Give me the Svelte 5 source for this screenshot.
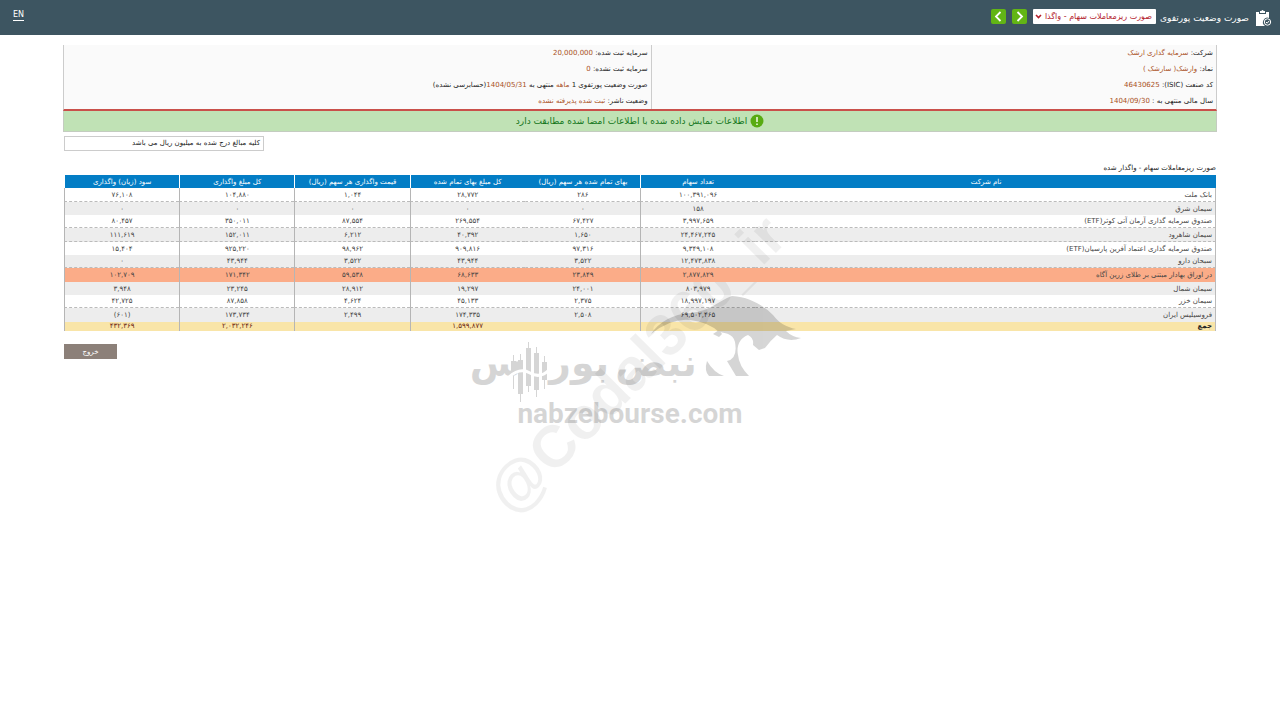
<script lang="ts">
  const reports = ['صورت ریزمعاملات سهام - واگذار شده', 'صورت خلاصه سرمایه گذاری‌ها'];
  let report = $state(reports[0]);

  const company = [
    { label: 'شرکت:', value: 'سرمایه گذاری ارشک' },
    { label: 'نماد:', value: 'وارشک( سارشک )' },
    { label: 'کد صنعت (ISIC):', value: '46430625' },
    { label: 'سال مالی منتهی به :', value: '1404/09/30' }
  ];

  const columns = [
    'نام شرکت',
    'تعداد سهام',
    'بهای تمام شده هر سهم (ریال)',
    'کل مبلغ بهای تمام شده',
    'قیمت واگذاری هر سهم (ریال)',
    'کل مبلغ واگذاری',
    'سود (زیان) واگذاری'
  ];

  const rows = [
    { name: 'بانک ملت', cells: ['۱۰۰,۳۹۱,۰۹۶', '۲۸۶', '۲۸,۷۷۲', '۱,۰۴۴', '۱۰۴,۸۸۰', '۷۶,۱۰۸'], dashed: true },
    { name: 'سیمان شرق', cells: ['۱۵۸', '۰', '۰', '۰', '۰', '۰'] },
    { name: 'صندوق سرمایه گذاری آرمان آتی کوثر(ETF)', cells: ['۳,۹۹۷,۶۵۹', '۶۷,۴۲۷', '۲۶۹,۵۵۴', '۸۷,۵۵۴', '۳۵۰,۰۱۱', '۸۰,۴۵۷'], dashed: true },
    { name: 'سیمان شاهرود', cells: ['۲۴,۴۶۷,۲۴۵', '۱,۶۵۰', '۴۰,۳۹۲', '۶,۲۱۲', '۱۵۲,۰۱۱', '۱۱۱,۶۱۹'], dashed: true },
    { name: 'صندوق سرمایه گذاری اعتماد آفرین پارسیان(ETF)', cells: ['۹,۳۴۹,۱۰۸', '۹۷,۳۱۶', '۹۰۹,۸۱۶', '۹۸,۹۶۲', '۹۲۵,۲۲۰', '۱۵,۴۰۴'] },
    { name: 'سبحان دارو', cells: ['۱۲,۴۷۳,۸۳۸', '۳,۵۲۲', '۴۳,۹۴۴', '۳,۵۲۲', '۴۳,۹۴۴', '۰'], dashed: true },
    { name: 'در اوراق بهادار مبتنی بر طلای زرین آگاه', cells: ['۲,۸۷۷,۸۲۹', '۲۳,۸۴۹', '۶۸,۶۳۳', '۵۹,۵۳۸', '۱۷۱,۳۴۲', '۱۰۲,۷۰۹'], active: true },
    { name: 'سیمان شمال', cells: ['۸۰۳,۹۷۹', '۲۴,۰۰۱', '۱۹,۲۹۷', '۲۸,۹۱۲', '۲۳,۲۴۵', '۳,۹۴۸'] },
    { name: 'سیمان خزر', cells: ['۱۸,۹۹۷,۱۹۷', '۲,۳۷۵', '۴۵,۱۳۳', '۴,۶۲۴', '۸۷,۸۵۸', '۴۲,۷۲۵'], dashed: true },
    { name: 'فروسیلیس ایران', cells: ['۶۹,۵۰۲,۴۶۵', '۲,۵۰۸', '۱۷۴,۳۳۵', '۲,۴۹۹', '۱۷۳,۷۳۴', '(۶۰۱)'] }
  ];

  const totals = ['', '', '۱,۵۹۹,۸۷۷', '', '۲,۰۳۲,۲۴۶', '۴۳۲,۳۶۹'];
</script>

<div class="page" dir="rtl">
  <header>
    <svg class="clipboard" width="18" height="18" viewBox="0 0 18 18" aria-hidden="true">
      <path d="M1 3h3v2h7V3h3v6a4.500 4.500 0 0 0-4 8H1z" fill="#fff" />
      <path d="M5 4V2h1.500a1 1 0 0 1 2 0H10v2z" fill="#fff" />
      <circle cx="12.5" cy="13" r="3.2" fill="#3d5561" stroke="#fff" stroke-width="1" />
      <path d="M11 13l1.2 1.2 2-2.3" fill="none" stroke="#fff" stroke-width="1" />
    </svg>
    <label class="title" for="report">صورت وضعیت پورتفوی</label>
    <div class="select-wrapper">
      <select id="report" bind:value={report}>
        {#each reports as item}
          <option value={item}>{item}</option>
        {/each}
      </select>
      <svg class="select-arrow" width="7" height="5" viewBox="0 0 7 5" aria-hidden="true">
        <path d="M1 1l2.5 2.5L6 1" fill="none" stroke="#b3202c" stroke-width="1.6" />
      </svg>
    </div>
    <button class="nav" aria-label="بعدی">
      <svg width="15" height="15" viewBox="0 0 15 15"><path d="M5.5 3l4.5 4.5L5.5 12" /></svg>
    </button>
    <button class="nav" aria-label="قبلی">
      <svg width="15" height="15" viewBox="0 0 15 15"><path d="M9.5 3L5 7.5l4.5 4.5" /></svg>
    </button>
    <a class="lang" href="#en">EN</a>
  </header>

  <main>
    <section class="info">
      <div class="info-col">
        {#each company as item}
          <p>{item.label} <span>{item.value}</span></p>
        {/each}
      </div>
      <div class="info-col">
        <p>سرمایه ثبت شده: <span>20,000,000</span></p>
        <p>سرمایه ثبت نشده: <span>0</span></p>
        <p>صورت وضعیت پورتفوی 1 <span>ماهه</span> منتهی به <span>1404/05/31</span>(حسابرسی نشده)</p>
        <p>وضعیت ناشر: <span>ثبت شده پذیرفته نشده</span></p>
      </div>
    </section>

    <div class="notice">
      <svg width="14" height="14" viewBox="0 0 14 14" aria-hidden="true">
        <circle cx="7" cy="7" r="6.5" fill="#58ab12" />
        <path d="M7 3v5M7 9.5v1.5" stroke="#e9f7dc" stroke-width="1.6" />
      </svg>
      اطلاعات نمایش داده شده با اطلاعات امضا شده مطابقت دارد
    </div>

    <p class="unit">کلیه مبالغ درج شده به میلیون ریال می باشد</p>

    <table>
      <caption>صورت ریزمعاملات سهام - واگذار شده</caption>
      <thead>
        <tr>
          {#each columns as column}
            <th scope="col">{column}</th>
          {/each}
        </tr>
      </thead>
      <tbody>
        {#each rows as row}
          <tr class:dashed={row.dashed} class:active={row.active}>
            <td>{row.name}</td>
            {#each row.cells as cell}
              <td>{cell}</td>
            {/each}
          </tr>
        {/each}
      </tbody>
      <tfoot>
        <tr>
          <td>جمع</td>
          {#each totals as total}
            <td>{total}</td>
          {/each}
        </tr>
      </tfoot>
    </table>

    <button class="exit">خروج</button>
  </main>

  <svg class="watermark" width="350" height="330" viewBox="470 200 350 330" direction="ltr">
    <text class="handle" x="512" y="517" transform="rotate(-45 512 517)">@Codal360_ir</text>
    <g class="logo">
      <text class="word" x="656" y="376">نبض</text>
      <text class="word" x="579" y="376">بور</text>
      <text class="word" x="496" y="376">س</text>
      <text class="site" x="630" y="423">nabzebourse.com</text>
      <path d="M511 361h5v12h-5zM513 355h1v34h-1zM518 360h5v34h-5zM520 354h1v48h-1zM526 348h5v38h-5zM528 342h1v50h-1zM534 353h5v37h-5zM536 347h1v50h-1zM542 362h5v18h-5zM544 356h1v33h-1z" />
      <path d="M651 334Q664 315 690 313C711 311 718 301 732 296C750 297 764 306 773 315C779 323 786 327 796 329L786 331Q792 337 801 338Q788 343 777 335Q771 340 765 348L759 350L753 345Q754 338 748 335C740 338 736 346 738 355Q739 366 749 376H736L727 361Q738 359 735 342C733 333 724 333 719 332Q708 322 690 320Q671 318 651 334z" />
      <path d="M707 361Q704 371 709 376H724Q714 373 707 361zM713 334l6-4 3 4-3 3z" />
    </g>
    <path d="M509 377Q520 367 530 373T549 370" fill="none" stroke="#fff" stroke-width="3" />
  </svg>
</div>

<style>
  :global(body) {
    background: #fff;
  }

  .page {
    position: relative;
    min-height: 100vh;
    color: #222;
    font-family: 'DejaVu Sans', 'Noto Sans', sans-serif;
    font-size: 7px;
  }

  header {
    display: flex;
    align-items: center;
    height: 35px;
    padding: 0 7px 2px 13px;
    background: #3d5561;
    box-sizing: border-box;
  }

  .clipboard {
    margin-top: 2px;
  }

  .title {
    margin: 2px 6px 0 4px;
    color: #fff;
    font-size: 9px;
  }

  .select-wrapper {
    position: relative;
    width: 123px;
    margin-left: 6px;
  }

  select {
    display: block;
    width: 100%;
    height: 15px;
    padding: 0 4px 0 12px;
    border: none;
    border-radius: 1px;
    appearance: none;
    background: #fff;
    color: #b3202c;
    font-family: inherit;
    font-size: 8px;
  }

  .select-arrow {
    position: absolute;
    left: 2px;
    top: 5px;
    pointer-events: none;
  }

  .nav {
    width: 15px;
    height: 15px;
    margin-left: 6px;
    padding: 0;
    border: none;
    border-radius: 2px;
    background: #62b515;
    cursor: pointer;
  }

  .nav svg {
    display: block;
    fill: none;
    stroke: #fff;
    stroke-width: 1.8;
  }

  .lang {
    margin-right: auto;
    margin-bottom: 4px;
    border-bottom: 1px solid #fff;
    color: #fff;
    font-size: 8px;
    line-height: 11px;
    text-decoration: none;
  }

  main {
    margin: 10px 5% 0;
  }

  .info {
    display: grid;
    grid-template-columns: 49fr 51fr;
    margin-left: -1px;
    margin-right: -1px;
    border: 1px solid #ccc;
    border-top: none;
    border-bottom: 2px solid #c9504a;
    background: #fafafa;
  }

  .info-col {
    padding: 0 3px;
  }

  .info-col + .info-col {
    border-right: 1px solid #ccc;
  }

  .info p {
    margin: 0;
    line-height: 16px;
    white-space: nowrap;
  }

  .info span {
    color: #a9501c;
  }

  .notice {
    display: flex;
    align-items: center;
    justify-content: center;
    gap: 3px;
    height: 20px;
    margin: 0 -1px;
    border: 1px solid #c4ccc0;
    border-top: none;
    background: #c0e2b5;
    color: #12751a;
    font-size: 9px;
  }

  .unit {
    width: 200px;
    margin: 4px auto 11px 0;
    padding: 0 3px;
    border: 1px solid #ccc;
    box-sizing: border-box;
    line-height: 13px;
  }

  table {
    width: 100%;
    border-collapse: separate;
    border-spacing: 0;
    table-layout: fixed;
  }

  caption {
    color: #222;
    line-height: 13px;
    text-align: right;
  }

  th,
  td {
    height: 13px;
    padding: 0;
    border-left: 1px solid transparent;
    box-sizing: border-box;
    line-height: 12px;
    text-align: center;
    white-space: nowrap;
  }

  th {
    background: #037dc5;
    background-clip: padding-box;
    color: #fff;
    font-weight: 400;
  }

  th:first-child {
    width: 40%;
  }

  th:nth-child(1),
  th:nth-child(3) {
    background-clip: border-box;
  }

  td {
    border-left-color: #b5b5b5;
    color: #444;
  }

  td:nth-child(1),
  td:nth-child(3) {
    border-left-color: transparent;
  }

  td:first-child {
    padding-right: 3px;
    border-right: 1px solid #bbb;
    text-align: right;
  }

  tbody tr:nth-child(even) {
    background: #ededed;
  }

  tbody tr:nth-child(3n + 1) td {
    height: 14px;
  }

  .dashed td {
    border-bottom: 1px dashed #bbb;
  }

  tbody .active {
    position: relative;
    z-index: 2;
    background: #fbac88;
  }

  tfoot tr {
    background: #f9e5a8;
  }

  tfoot td {
    height: 9px;
    color: #6b2410;
    line-height: 9px;
  }

  tfoot td:first-child {
    color: #222;
    font-weight: 700;
  }

  .exit {
    display: block;
    width: 53px;
    height: 15px;
    margin: 13px auto 0 0;
    padding: 0;
    border: none;
    background: #8c8079;
    color: #fff;
    font-family: inherit;
    font-size: 7px;
    cursor: pointer;
  }

  .watermark {
    position: absolute;
    z-index: 1;
    top: 200px;
    left: calc(50% - 170px);
    overflow: visible;
    pointer-events: none;
  }

  .handle {
    fill: #000;
    fill-opacity: 0.06;
    font-family: 'Liberation Sans', sans-serif;
    font-size: 59px;
    font-weight: 700;
  }

  .logo {
    fill: #000;
    opacity: 0.16;
  }

  .word {
    font-family: 'DejaVu Sans', sans-serif;
    font-size: 38px;
    font-weight: 700;
    text-anchor: middle;
  }

  .site {
    font-family: Roboto, sans-serif;
    font-size: 28px;
    font-weight: 700;
    text-anchor: middle;
  }
</style>
